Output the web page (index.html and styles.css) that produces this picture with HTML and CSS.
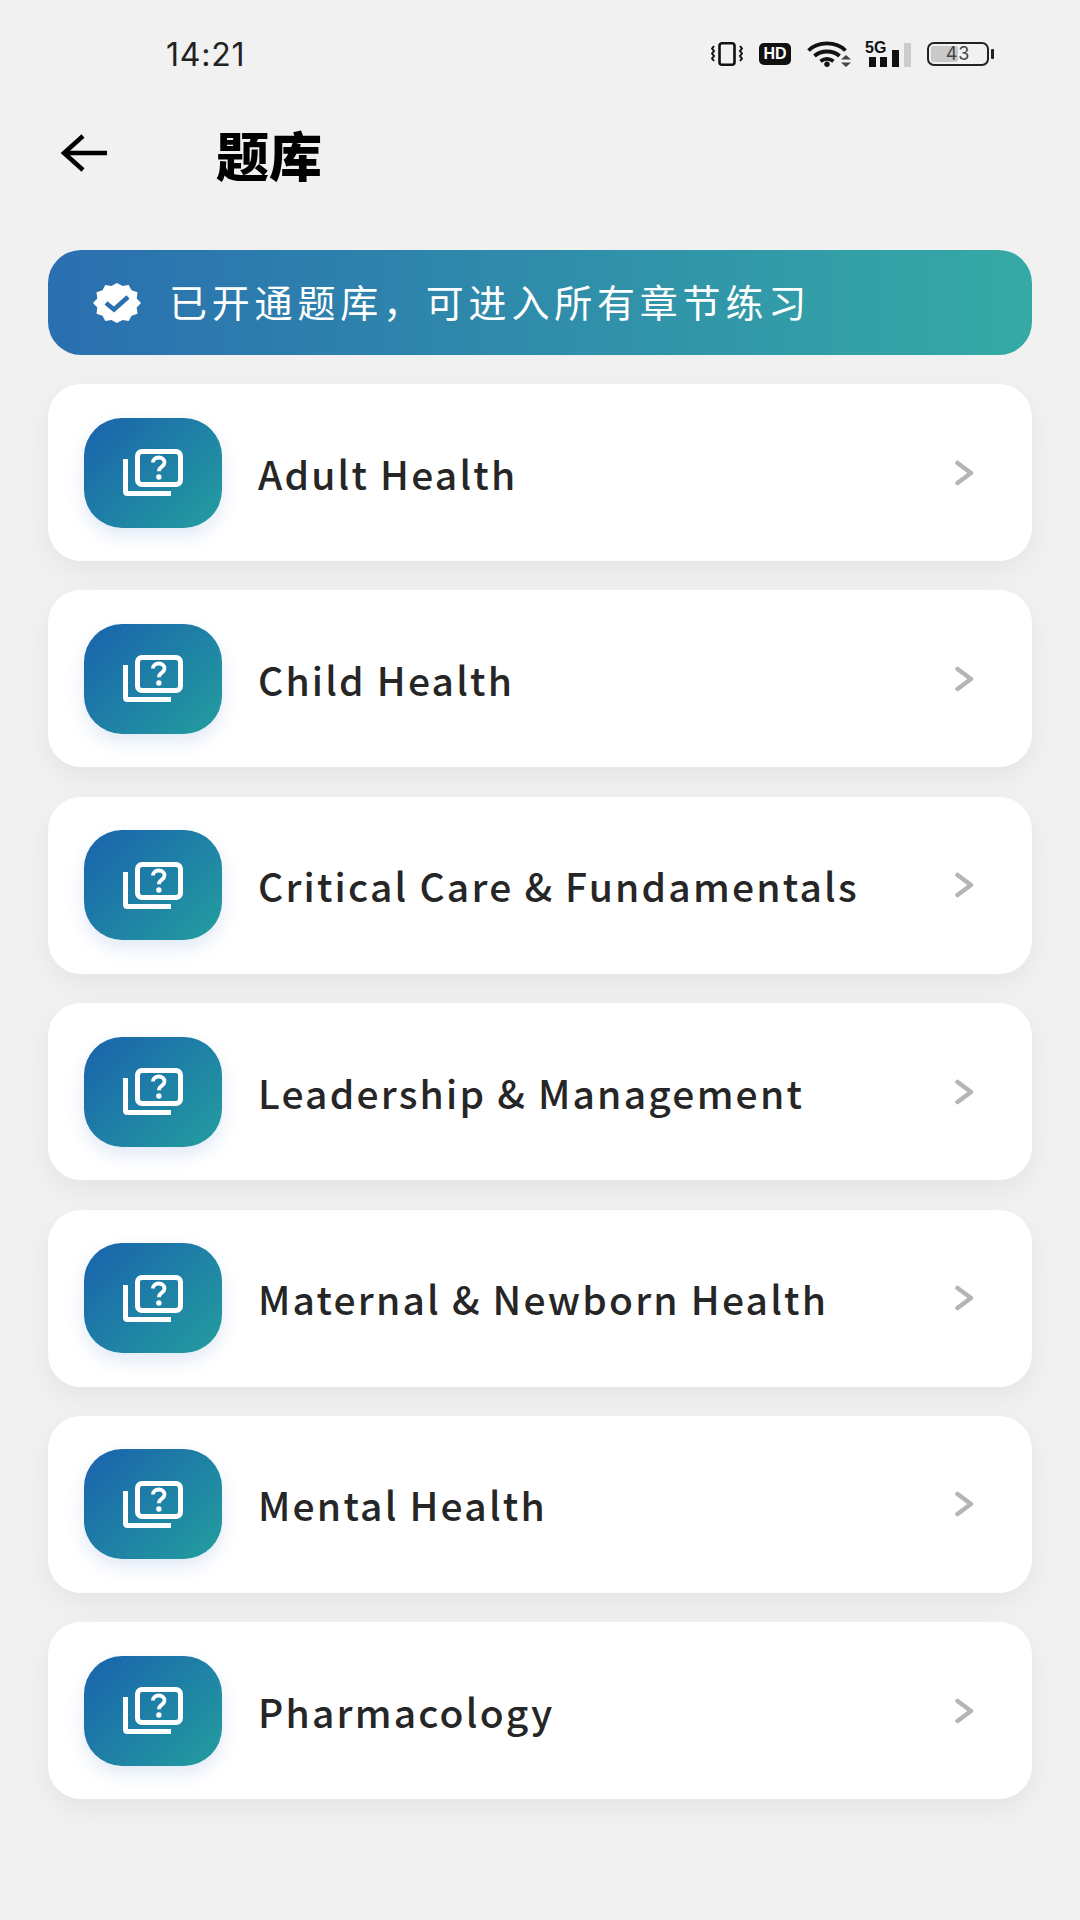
FILE: index.html
```html
<!DOCTYPE html>
<html lang="zh">
<head>
<meta charset="utf-8">
<title>题库</title>
<link rel="stylesheet" href="styles.css">
</head>
<body>
<svg class="defs" width="0" height="0" aria-hidden="true">
  <defs>
    <symbol id="q" viewBox="0 0 60 47">
      <path d="M2.500 10V42.500Q2.500 44.500 4.500 44.500H48" fill="none" stroke="#fff" stroke-width="5"/>
      <rect x="14.500" y="2.500" width="43" height="33" rx="4.500" fill="none" stroke="#fff" stroke-width="5"/>
      <path d="M30 13.500c0-3 2.300-5 5.700-5s5.800 2 5.800 4.900c0 4.400-5.600 4.300-5.600 8.800" fill="none" stroke="#fff" stroke-width="3.800"/>
      <circle cx="35.900" cy="28" r="2.700" fill="#fff"/>
    </symbol>
    <symbol id="chev" viewBox="0 0 20 26">
      <path d="M2.500 3L16 13 2.500 23" fill="none" stroke="#b5b5b5" stroke-width="4.500" stroke-linecap="round" stroke-linejoin="round"/>
    </symbol>
  </defs>
</svg>
<div class="page">
  <header class="status">
    <span class="time">14:21</span>
    <div class="status-icons">
      <svg class="si-vib" viewBox="0 0 32 24"><rect x="8.500" y="1.300" width="15" height="21.400" rx="2.500" fill="none" stroke="#111" stroke-width="2.600"/><path d="M3 4l-2 2.500 2 2.500-2 2.500 2 2.500-2 2.500 2 2.500M29 4l2 2.500-2 2.500 2 2.500-2 2.500 2 2.500-2 2.500" fill="none" stroke="#111" stroke-width="2"/></svg>
      <span class="hd">HD</span>
      <svg class="si-wifi" viewBox="0 0 44 26"><path d="M1.500 9.500C11 0 29 0 38.500 9.500M7.500 15c6.500-6 18.500-6 25 0M13.500 20.300c4-3 9-3 13 0" fill="none" stroke="#111" stroke-width="3.800"/><circle cx="20" cy="23.300" r="2.700" fill="#111"/><path d="M34 18.500h10l-5-4.500zM34 21.500h10l-5 4.500z" fill="#444"/></svg>
      <div class="si-sig">
        <span class="five-g">5G</span>
        <svg viewBox="0 0 46 25"><rect x="4" y="15" width="7" height="10" fill="#111"/><rect x="15" y="15" width="7" height="10" fill="#111"/><rect x="27" y="8" width="7" height="17" fill="#111"/><rect x="39" y="1" width="7" height="24" fill="#ccc"/></svg>
      </div>
      <div class="battery"><div class="bat-body"><span class="bat-fill"></span><span class="bat-num">43</span></div><span class="bat-cap"></span></div>
    </div>
  </header>
  <div class="topbar">
    <svg class="back" viewBox="0 0 50 40"><path d="M48 20H5M24 3L5 20l19 17" fill="none" stroke="#000" stroke-width="4.500"/></svg>
    <h1 class="title">题库</h1>
  </div>
  <div class="banner">
    <svg class="badge" viewBox="0 0 48 40"><path d="M24 0l5.500 3 6.200-1 2.800 5.200 6 2-.8 6.200L48 20l-4.300 4.600.8 6.200-6 2-2.800 5.200-6.200-1L24 40l-5.500-3-6.200 1-2.800-5.200-6-2 .8-6.200L0 20l4.300-4.600-.8-6.200 6-2 2.800-5.200 6.200 1z" fill="#fff"/><path d="M13 20l8 6.500L35 14" fill="none" stroke="#2a6fae" stroke-width="4.500"/></svg>
    <span class="banner-text">已开通题库，可进入所有章节练习</span>
  </div>
  <ul class="list">
    <li class="card"><span class="tile"><svg class="tile-icon"><use href="#q"/></svg></span><span class="name">Adult Health</span><svg class="chev"><use href="#chev"/></svg></li>
    <li class="card"><span class="tile"><svg class="tile-icon"><use href="#q"/></svg></span><span class="name">Child Health</span><svg class="chev"><use href="#chev"/></svg></li>
    <li class="card"><span class="tile"><svg class="tile-icon"><use href="#q"/></svg></span><span class="name">Critical Care &amp; Fundamentals</span><svg class="chev"><use href="#chev"/></svg></li>
    <li class="card"><span class="tile"><svg class="tile-icon"><use href="#q"/></svg></span><span class="name">Leadership &amp; Management</span><svg class="chev"><use href="#chev"/></svg></li>
    <li class="card"><span class="tile"><svg class="tile-icon"><use href="#q"/></svg></span><span class="name">Maternal &amp; Newborn Health</span><svg class="chev"><use href="#chev"/></svg></li>
    <li class="card"><span class="tile"><svg class="tile-icon"><use href="#q"/></svg></span><span class="name">Mental Health</span><svg class="chev"><use href="#chev"/></svg></li>
    <li class="card"><span class="tile"><svg class="tile-icon"><use href="#q"/></svg></span><span class="name">Pharmacology</span><svg class="chev"><use href="#chev"/></svg></li>
  </ul>
</div>
</body>
</html>
```
FILE: styles.css
```css
* { box-sizing: border-box; }
html, body { margin: 0; padding: 0; }
body {
  width: 1080px;
  height: 1920px;
  background: #f1f1f1;
  font-family: "Noto Sans CJK SC", sans-serif;
  overflow: hidden;
}
.defs { display: block; height: 0; }
.page { display: flex; flex-direction: column; }

.status {
  height: 108px;
  padding: 36px 86px 0 166px;
  display: flex;
  justify-content: space-between;
  align-items: flex-start;
}
.time { font: 400 32px/38px "Inter", sans-serif; color: #222; letter-spacing: 0.800px; }
.status-icons { display: flex; align-items: center; gap: 16px; height: 36px; }
.si-vib { width: 32px; height: 24px; }
.hd {
  width: 32px; height: 22px; border-radius: 5px; background: #111; color: #fff;
  font: 800 16px/22px "Liberation Sans", sans-serif; text-align: center;
}
.si-wifi { width: 44px; height: 26px; }
.si-sig { position: relative; width: 46px; height: 25px; margin-left: -2px; }
.si-sig svg { position: absolute; left: 0; top: 0; width: 46px; height: 25px; }
.five-g { position: absolute; left: 0; top: -1px; font: 800 16px/14px "Liberation Sans", sans-serif; color: #111; z-index: 1; }
.battery { display: flex; align-items: center; gap: 2px; }
.bat-body {
  position: relative; width: 62px; height: 24px; border: 2.500px solid #222; border-radius: 7px;
  display: flex; align-items: center; justify-content: center;
}
.bat-fill { position: absolute; left: 2px; top: 2px; bottom: 2px; width: 27px; background: #c9c9c9; border-radius: 2px; }
.bat-num { position: relative; font: 400 18px/18px "Inter", sans-serif; color: #444; letter-spacing: 1px; }
.bat-cap { width: 3px; height: 10px; background: #222; border-radius: 1px; }

.topbar { height: 142px; display: flex; align-items: flex-start; padding: 25px 0 0 59px; }
.back { width: 50px; height: 40px; }
.title {
  margin: 0 0 0 107px;
  font: 900 53px/60px "Noto Sans CJK SC", sans-serif;
  color: #000;
  position: relative;
  top: -9px;
}

.banner {
  margin: 0 48px;
  height: 105px;
  border-radius: 33px;
  background: linear-gradient(90deg, #2a6fb0, #35aaa5);
  display: flex;
  align-items: center;
  padding: 0 0 0 45px;
  gap: 28px;
}
.badge { width: 48px; height: 40px; flex: none; }
.banner-text { font: 400 38px/46px "Noto Sans CJK SC", sans-serif; color: #fff; letter-spacing: 4.800px; position: relative; top: -2px; }

.list { list-style: none; margin: 29px 48px 0; padding: 0; display: flex; flex-direction: column; gap: 29.400px; }
.card {
  height: 177px;
  background: #fff;
  border-radius: 33px;
  box-shadow: 0 10px 28px rgba(0,0,0,.055);
  display: flex;
  align-items: center;
  padding: 0 56px 0 36px;
}
.tile {
  width: 138px; height: 110px; flex: none;
  border-radius: 38px;
  background: linear-gradient(135deg, #1a62ad, #239e9f);
  box-shadow: 0 8px 18px rgba(40,100,190,.14);
  display: flex; align-items: center; justify-content: center;
}
.tile-icon { width: 60px; height: 47px; }
.name {
  flex: 1;
  margin-left: 36px;
  font: 500 39px/48px "Noto Sans CJK SC", sans-serif;
  color: #262626;
  letter-spacing: 2.200px;
}
.chev { width: 20px; height: 26px; flex: none; position: relative; left: -1px; }
```
